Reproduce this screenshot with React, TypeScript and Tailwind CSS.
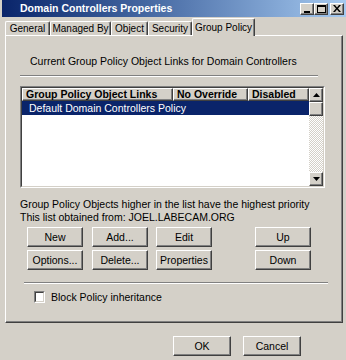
import React from "react";

const raised =
  "bg-[#d4d0c8] border border-t-white border-l-white border-r-[#404040] border-b-[#404040] shadow-[inset_-1px_-1px_0_#808080]";

function CapBtn({ kind }: { kind: "min" | "max" | "close" }) {
  return (
    <div className={`w-[14px] h-[12px] flex items-center justify-center ${raised}`}>
      {kind === "min" && (
        <svg width="8" height="8" viewBox="0 0 8 8">
          <rect x="1" y="6" width="6" height="2" fill="#000" />
        </svg>
      )}
      {kind === "max" && (
        <svg width="9" height="8" viewBox="0 0 9 8">
          <rect x="0.5" y="0.5" width="8" height="7" fill="none" stroke="#000" />
          <rect x="0" y="0" width="9" height="2" fill="#000" />
        </svg>
      )}
      {kind === "close" && (
        <svg width="8" height="7" viewBox="0 0 8 7">
          <path d="M0 0h2l2 2.5L6 0h2L5 3.5 8 7H6L4 4.5 2 7H0l3-3.5z" fill="#000" />
        </svg>
      )}
    </div>
  );
}

function Tab({ label, w }: { label: string; w: string }) {
  return (
    <div
      className={`${w} h-[14px] flex items-center justify-center text-[10px] leading-none whitespace-nowrap border-t border-l border-t-white border-l-white border-r border-r-[#404040] shadow-[inset_-1px_0_0_#808080] rounded-t-[2px]`}
    >
      {label}
    </div>
  );
}

function Btn({ label, w = "w-[56px]", cls = "" }: { label: string; w?: string; cls?: string }) {
  return (
    <div className={`${w} h-[20px] flex items-center justify-center text-[10.5px] leading-none ${raised} ${cls}`}>
      {label}
    </div>
  );
}

function Arrow({ up }: { up?: boolean }) {
  return (
    <div className={`h-[14px] flex items-center justify-center ${raised}`}>
      <svg width="7" height="4" viewBox="0 0 7 4">
        {up ? <path d="M3.5 0L7 4H0z" fill="#000" /> : <path d="M0 0h7L3.5 4z" fill="#000" />}
      </svg>
    </div>
  );
}

export default function App() {
  return (
    <div className="w-[346px] h-[360px] overflow-hidden bg-[#d4d0c8] text-black flex flex-col pl-[2px] font-['Liberation_Sans',Arial,sans-serif]">
      {/* Title bar */}
      <div className="h-[17px] shrink-0 flex items-center bg-linear-to-r from-[#0a246a] to-[#a6caf0] pl-[18px] pr-[2px]">
        <span className="flex-1 text-white font-bold text-[10.5px] leading-none">
          Domain Controllers Properties
        </span>
        <div className="flex items-center">
          <CapBtn kind="min" />
          <CapBtn kind="max" />
          <div className="w-[2px]" />
          <CapBtn kind="close" />
        </div>
      </div>

      {/* Tabs */}
      <div className="h-[18px] shrink-0 flex items-end ml-[3px]">
        <Tab label="General" w="w-[45px]" />
        <Tab label="Managed By" w="w-[61px]" />
        <Tab label="Object" w="w-[37px]" />
        <Tab label="Security" w="w-[44px]" />
        <div className="relative z-10 -mb-px w-[63px] h-[18px] flex items-start justify-center pt-[4px] text-[10px] leading-none whitespace-nowrap bg-[#d4d0c8] border-t border-l border-t-white border-l-white border-r border-r-[#404040] shadow-[inset_-1px_0_0_#808080] rounded-t-[2px]">
          Group Policy
        </div>
      </div>

      {/* Panel */}
      <div className="ml-[3px] w-[338px] h-[288px] shrink-0 flex flex-col border border-t-white border-l-white border-r-[#404040] border-b-[#404040] shadow-[inset_-1px_-1px_0_#808080]">
        <div className="mt-[19px] ml-[24px] text-[10.5px] leading-[13px]">
          Current Group Policy Object Links for Domain Controllers
        </div>
        <div className="mt-[7px] ml-[14px] w-[298px] h-[2px] border-t border-t-[#808080] border-b border-b-white" />

        {/* List */}
        <div className="mt-[9px] ml-[14px] w-[305px] h-[102px] flex border border-t-[#808080] border-l-[#808080] border-r-white border-b-white">
          <div className="flex-1 flex border border-t-[#404040] border-l-[#404040] border-r-[#d4d0c8] border-b-[#d4d0c8] bg-white">
            <div className="flex-1 flex flex-col">
              <div className="h-[13px] flex text-[10.5px] font-bold leading-none">
                <div className={`w-[151px] flex items-center pl-[3px] overflow-hidden whitespace-nowrap ${raised}`}>
                  Group Policy Object Links
                </div>
                <div className={`w-[75px] flex items-center pl-[3px] overflow-hidden whitespace-nowrap ${raised}`}>
                  No Override
                </div>
                <div className={`flex-1 flex items-center pl-[3px] overflow-hidden whitespace-nowrap ${raised}`}>
                  Disabled
                </div>
              </div>
              <div className="h-[14px] flex items-center bg-[#0a246a] text-white pl-[7px] text-[10.5px] leading-none whitespace-nowrap">
                Default Domain Controllers Policy
              </div>
            </div>
            <div className="w-[14px] flex flex-col">
              <Arrow up />
              <div className={`h-[14px] ${raised}`} />
              <div className="flex-1 bg-[image:repeating-conic-gradient(#ffffff_0%_25%,#d4d0c8_0%_50%)] bg-[length:2px_2px]" />
              <Arrow />
            </div>
          </div>
        </div>

        <div className="mt-[10px] ml-[14px] text-[10.5px] leading-[13px] whitespace-nowrap">
          <div>Group Policy Objects higher in the list have the highest priority</div>
          <div>This list obtained from: JOEL.LABECAM.ORG</div>
        </div>

        <div className="mt-[3px] ml-[21px] flex">
          <Btn label="New" />
          <Btn label="Add..." cls="ml-[9px]" />
          <Btn label="Edit" cls="ml-[8px]" />
          <Btn label="Up" cls="ml-[43px]" />
        </div>
        <div className="mt-[3px] ml-[21px] flex">
          <Btn label="Options..." />
          <Btn label="Delete..." cls="ml-[9px]" />
          <Btn label="Properties" cls="ml-[8px]" />
          <Btn label="Down" cls="ml-[43px]" />
        </div>

        <div className="mt-[12px] ml-[18px] w-[304px] h-[2px] border-t border-t-[#808080] border-b border-b-white" />

        <div className="mt-[7px] ml-[28px] flex items-center">
          <div className="w-[11px] h-[12px] border border-t-[#808080] border-l-[#808080] border-r-white border-b-white">
            <div className="w-full h-full bg-white border border-t-[#404040] border-l-[#404040] border-r-[#d4d0c8] border-b-[#d4d0c8]" />
          </div>
          <span className="ml-[6px] text-[10.5px] leading-none">Block Policy inheritance</span>
        </div>
      </div>

      {/* Bottom buttons */}
      <div className="mt-[13px] ml-[171px] flex">
        <Btn label="OK" w="w-[58px]" />
        <Btn label="Cancel" w="w-[58px]" cls="ml-[12px]" />
      </div>
    </div>
  );
}
